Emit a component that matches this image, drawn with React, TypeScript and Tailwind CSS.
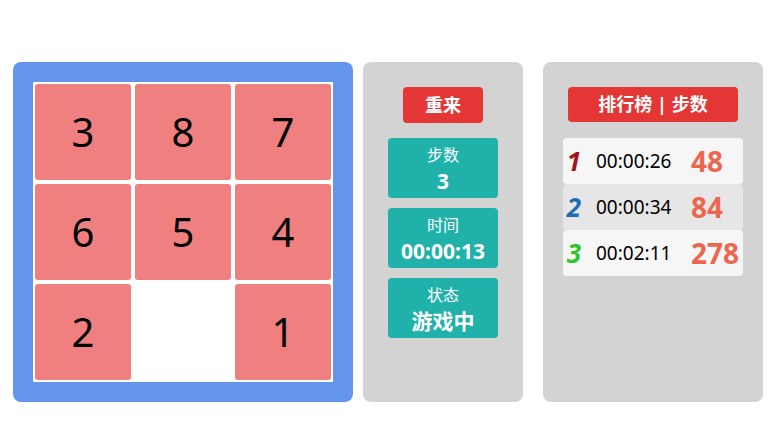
import React from 'react';

const tiles = [3, 8, 7, 6, 5, 4, 2, 0, 1];

const stats = [
  { label: '步数', value: '3' },
  { label: '时间', value: '00:00:13' },
  { label: '状态', value: '游戏中' },
];

const ranks = [
  { n: 1, color: 'text-[#a0141e]', time: '00:00:26', steps: 48, bg: 'bg-[#f6f6f6]' },
  { n: 2, color: 'text-[#1f6db5]', time: '00:00:34', steps: 84, bg: 'bg-[#e6e6e6]' },
  { n: 3, color: 'text-[#2fc52f]', time: '00:02:11', steps: 278, bg: 'bg-[#f6f6f6]' },
];

const font = { fontFamily: '"Noto Sans", "Noto Sans CJK SC", sans-serif' };

const App = () => {
  return (
    <div className="w-[778px] h-[438px] bg-white flex items-start pt-[62px] pl-[13px]" style={font}>
      <div className="w-[340px] h-[340px] bg-[#6495ed] rounded-lg p-5">
        <div className="w-[300px] h-[300px] bg-white grid grid-cols-3">
          {tiles.map((t, i) => (
            <div key={i} className="p-[2px]">
              {t !== 0 && (
                <div className="w-full h-full bg-[#f08080] rounded-[3px] flex items-center justify-center text-[40px] text-black">
                  {t}
                </div>
              )}
            </div>
          ))}
        </div>
      </div>

      <div className="ml-[10px] w-[160px] h-[340px] bg-[#d3d3d3] rounded-lg flex flex-col items-center pt-[25px]">
        <div className="w-[80px] h-[36px] bg-[#e53636] rounded-[4px] flex items-center justify-center text-white font-bold text-[18px]">
          重来
        </div>
        <div className="mt-[15px] flex flex-col gap-[10px]">
          {stats.map((s) => (
            <div key={s.label} className="w-[110px] h-[60px] bg-[#20b2aa] rounded-[4px] flex flex-col items-center justify-center text-white leading-[26px]">
              <div className="text-[16px]">{s.label}</div>
              <div className="text-[21px] font-bold">{s.value}</div>
            </div>
          ))}
        </div>
      </div>

      <div className="ml-[20px] w-[220px] h-[340px] bg-[#d3d3d3] rounded-lg flex flex-col items-center pt-[25px]">
        <div className="w-[170px] h-[35px] bg-[#e53636] rounded-[4px] flex items-center justify-center text-white font-bold text-[18px]">
          排行榜 | 步数
        </div>
        <div className="mt-[16px] w-[180px] flex flex-col">
          {ranks.map((r) => (
            <div key={r.n} className={`h-[46px] ${r.bg} rounded-[4px] flex items-center`}>
              <span className={`w-[22px] text-center italic font-bold text-[26px] ${r.color}`}>{r.n}</span>
              <span className="ml-[11px] w-[95px] text-[19px] text-black">{r.time}</span>
              <span className="text-[28px] font-bold text-[#ec6650]">{r.steps}</span>
            </div>
          ))}
        </div>
      </div>
    </div>
  );
};

export default App;
